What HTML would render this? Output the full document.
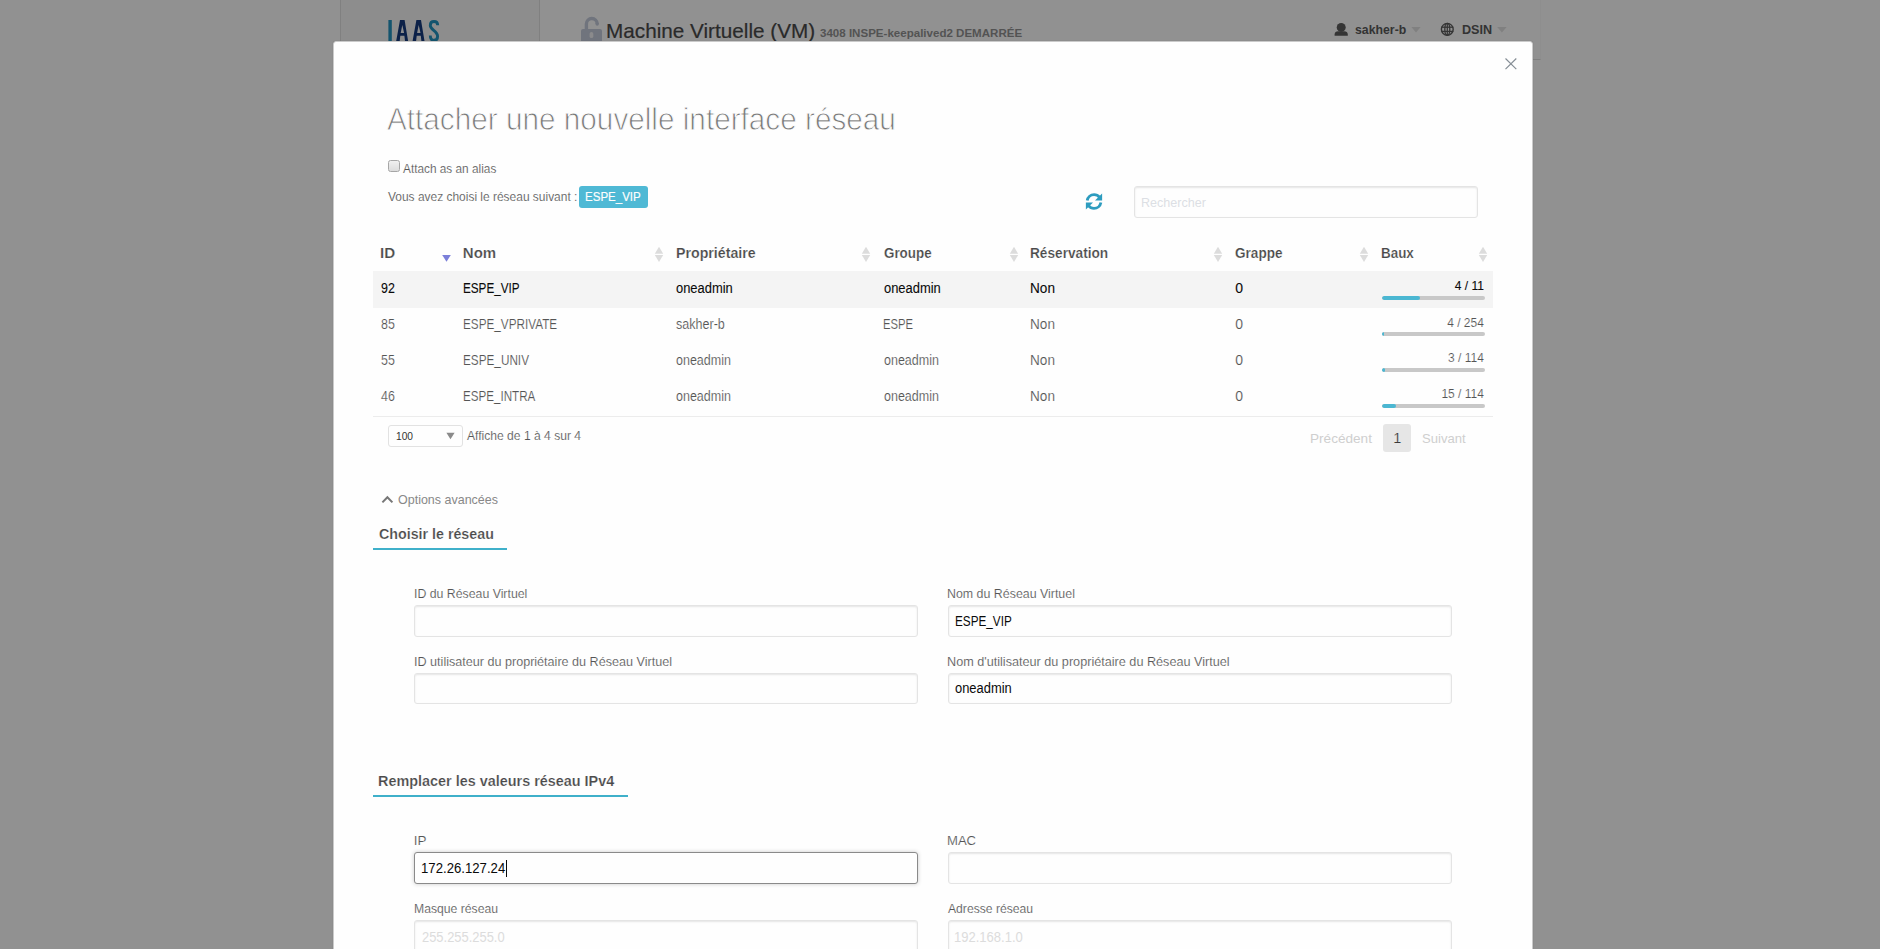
<!DOCTYPE html>
<html><head><meta charset="utf-8"><title>Attacher une nouvelle interface réseau</title>
<style>
html,body{margin:0;padding:0;width:1880px;height:949px;overflow:hidden;background:#fff;font-family:"Liberation Sans",sans-serif;}
.t{position:absolute;white-space:nowrap;transform-origin:0 0;}
#page{position:absolute;left:0;top:0;width:1880px;height:949px;background:#fff;}
#side{position:absolute;left:340px;top:0;width:198px;height:949px;background:#f8f8f8;border-left:1px solid #e0e0e0;border-right:1px solid #e0e0e0;}
#hdr{position:absolute;left:540px;top:0;width:1000px;height:59px;border-bottom:1px solid #dedede;border-right:1px solid #f9f9f9;}
#ov{position:absolute;left:0;top:0;width:1880px;height:949px;background:rgba(10,10,10,0.45);}
#modal{position:absolute;left:333px;top:41px;width:1198px;height:940px;background:#fefefe;border:1px solid #cacaca;border-radius:3px;box-shadow:0 0 1px rgba(0,0,0,0.25);}
#m{position:absolute;left:0;top:0;width:1880px;height:949px;}
.inp{position:absolute;box-sizing:border-box;height:32px;background:#fefefe;border:1px solid #e4e4e4;border-radius:3px;box-shadow:inset 0 1px 2px rgba(10,10,10,0.1);}
.bar{position:absolute;left:1382px;width:103.3px;height:4px;background:#c8c8c8;border-radius:2px;overflow:hidden;}
.bar div{height:4px;background:#4bb7d2;border-radius:2px;}
.so{position:absolute;}
</style></head><body>
<div id="page">
  <div id="side"></div>
  <div id="hdr"></div>
  <svg style="position:absolute;left:380px;top:14px" width="70" height="30" viewBox="380 14 70 30">
    <rect x="388.4" y="20" width="3.4" height="24" fill="#1a91c0"/>
    <path d="M396.2 41 L400 20 L404.6 20 L408.1 41 Z M402.3 24.9 L404.1 32.9 L400.7 32.9 Z M400.3 35.7 L404.4 35.7 L405 41 L399.7 41 Z" fill="#0d347a" fill-rule="evenodd"/>
    <path d="M412.6 41 L416.4 20 L421 20 L424.5 41 Z M418.7 24.9 L420.5 32.9 L417.1 32.9 Z M416.7 35.7 L420.8 35.7 L421.4 41 L416.1 41 Z" fill="#0d347a" fill-rule="evenodd"/>
    <path d="M437.7 25.2 C437.7 22.6 436.2 21.5 434 21.5 C431.7 21.5 430.3 23 430.3 25.4 C430.3 29.6 437.6 31.2 437.6 36.2 C437.6 38.8 436.2 40.3 434 40.3 C431.7 40.3 430.3 38.8 430.3 35.4" fill="none" stroke="#1a91c0" stroke-width="2.9"/>
  </svg>
  <!-- lock -->
  <svg style="position:absolute;left:578px;top:14px" width="28" height="30" viewBox="578 14 28 30">
    <path d="M586.4 30 L586.4 23.9 A5.4 5.4 0 0 1 597.2 23.9" fill="none" stroke="#c3cadb" stroke-width="3.4"/>
    <circle cx="597.2" cy="24" r="1.7" fill="#c3cadb"/>
    <rect x="581" y="29" width="21" height="14" rx="2" fill="#c3cadb"/>
    <rect x="589.6" y="32" width="3.7" height="6" rx="1.85" fill="#f2f3f6"/>
  </svg>
  <div class=t style='left:605.81px;top:18px;font-size:21px;font-weight:400;line-height:26px;color:#444;transform:scaleX(0.9865);-webkit-text-stroke:0.2px #444;'>Machine Virtuelle (VM)</div>
<div class=t style='left:819.50px;top:26px;font-size:11.5px;font-weight:700;line-height:14px;color:#8f8f8f;transform:scaleX(1.0041);'>3408 INSPE-keepalived2 DEMARRÉE</div>
<div class=t style='left:1355.00px;top:21px;font-size:13.5px;font-weight:700;line-height:17px;color:#555;transform:scaleX(0.9103);'>sakher-b</div>
<div class=t style='left:1461.60px;top:21px;font-size:13.5px;font-weight:700;line-height:17px;color:#555;transform:scaleX(0.9332);'>DSIN</div>
  <!-- user icon -->
  <svg style="position:absolute;left:1333px;top:21px" width="17" height="17" viewBox="1333 21 17 17">
    <circle cx="1341.2" cy="27.4" r="4.5" fill="#585858"/>
    <path d="M1334.6 35.8 L1334.6 34.4 C1334.6 32.2 1336.2 31.2 1338 31.2 L1344.4 31.2 C1346.2 31.2 1347.8 32.2 1347.8 34.4 L1347.8 35.8 Z" fill="#585858"/>
  </svg>
  <svg style="position:absolute;left:1410px;top:26px" width="12" height="8" viewBox="0 0 12 8"><path d="M1.4 1 L10.6 1 L6 6.4 Z" fill="#e0e0e0"/></svg>
  <!-- globe -->
  <svg style="position:absolute;left:1440px;top:22px" width="15" height="15" viewBox="1440 22 15 15">
    <circle cx="1447.3" cy="29.3" r="5.9" fill="none" stroke="#585858" stroke-width="1.4"/>
    <ellipse cx="1447.3" cy="29.3" rx="2.5" ry="5.9" fill="none" stroke="#585858" stroke-width="1.3"/>
    <line x1="1441.3" y1="27.2" x2="1453.3" y2="27.2" stroke="#585858" stroke-width="1.3"/>
    <line x1="1441.3" y1="31.4" x2="1453.3" y2="31.4" stroke="#585858" stroke-width="1.3"/>
    <line x1="1447.3" y1="23.4" x2="1447.3" y2="35.2" stroke="#585858" stroke-width="1.2"/>
  </svg>
  <svg style="position:absolute;left:1496px;top:26px" width="12" height="8" viewBox="0 0 12 8"><path d="M1.2 1 L10.6 1 L5.9 6.4 Z" fill="#e0e0e0"/></svg>
</div>
<div id="ov"></div>
<div id="modal"></div>
<div id="m">
  <!-- close X -->
  <svg style="position:absolute;left:1503px;top:55.6px" width="16" height="16" viewBox="0 0 16 16">
    <path d="M2.5 2.5 L13.3 13.1 M13.3 2.5 L2.5 13.1" stroke="#858d95" stroke-width="1.15" fill="none"/>
  </svg>
  <!-- checkbox -->
  <div style="position:absolute;left:388px;top:160px;width:10px;height:10px;border:1px solid #a6a6a6;border-radius:2.5px;background:linear-gradient(#f0f0f0,#dcdcdc);"></div>
  <!-- label -->
  <div style="position:absolute;left:579px;top:186px;width:69px;height:21.5px;background:#4fb9d5;border-radius:3px;"></div>
  <!-- refresh icon -->
  <svg style="position:absolute;left:1084px;top:192px" width="20" height="19" viewBox="0 0 20 19">
    <path d="M3.2 8.6 C3.8 5.2 6.6 2.6 10.1 2.6 C12.4 2.6 14.3 3.7 15.6 5.3" fill="none" stroke="#2d9cbf" stroke-width="2.8"/>
    <path d="M18.1 1.4 L18.1 8.6 L11 8.6 Z" fill="#2d9cbf"/>
    <path d="M16.9 10.4 C16.3 13.8 13.5 16.4 10 16.4 C7.7 16.4 5.8 15.3 4.5 13.7" fill="none" stroke="#2d9cbf" stroke-width="2.8"/>
    <path d="M1.9 17.6 L1.9 10.4 L9 10.4 Z" fill="#2d9cbf"/>
  </svg>
  <!-- search -->
  <div class="inp" style="left:1134px;top:186px;width:344px;height:32px;"></div>
  <!-- selected row -->
  <div style="position:absolute;left:373px;top:271px;width:1120px;height:36.5px;background:#f4f4f4;"></div>
  <div style="position:absolute;left:373px;top:416px;width:1120px;height:1px;background:#ececec;"></div>
  <svg class=so style='left:654.2px;top:246px' width='10' height='17' viewBox='0 0 10 17'><path d='M5 0.8 L9.2 7.8 L0.8 7.8 Z' fill='#dcdcdc'/><path d='M0.8 9 L9.2 9 L5 16 Z' fill='#dcdcdc'/></svg><svg class=so style='left:861.2px;top:246px' width='10' height='17' viewBox='0 0 10 17'><path d='M5 0.8 L9.2 7.8 L0.8 7.8 Z' fill='#dcdcdc'/><path d='M0.8 9 L9.2 9 L5 16 Z' fill='#dcdcdc'/></svg><svg class=so style='left:1008.6px;top:246px' width='10' height='17' viewBox='0 0 10 17'><path d='M5 0.8 L9.2 7.8 L0.8 7.8 Z' fill='#dcdcdc'/><path d='M0.8 9 L9.2 9 L5 16 Z' fill='#dcdcdc'/></svg><svg class=so style='left:1212.6px;top:246px' width='10' height='17' viewBox='0 0 10 17'><path d='M5 0.8 L9.2 7.8 L0.8 7.8 Z' fill='#dcdcdc'/><path d='M0.8 9 L9.2 9 L5 16 Z' fill='#dcdcdc'/></svg><svg class=so style='left:1358.9px;top:246px' width='10' height='17' viewBox='0 0 10 17'><path d='M5 0.8 L9.2 7.8 L0.8 7.8 Z' fill='#dcdcdc'/><path d='M0.8 9 L9.2 9 L5 16 Z' fill='#dcdcdc'/></svg><svg class=so style='left:1478.0px;top:246px' width='10' height='17' viewBox='0 0 10 17'><path d='M5 0.8 L9.2 7.8 L0.8 7.8 Z' fill='#dcdcdc'/><path d='M0.8 9 L9.2 9 L5 16 Z' fill='#dcdcdc'/></svg><svg class=so style='left:441px;top:254px' width='11' height='9' viewBox='0 0 11 9'><path d='M1.2 1 L9.8 1 L5.5 7.8 Z' fill='#7b7fd9'/></svg>
  <div class=bar style='top:296px'><div style='width:37.56px'></div></div>
<div class=bar style='top:332px'><div style='width:1.63px'></div></div>
<div class=bar style='top:368px'><div style='width:2.72px'></div></div>
<div class=bar style='top:404px'><div style='width:13.59px'></div></div>

  <!-- page length select -->
  <div style="position:absolute;left:388px;top:425px;width:72.5px;height:19.5px;border:1px solid #e2e2e2;border-radius:3px;background:#fefefe;"></div>
  <svg style="position:absolute;left:445px;top:431px" width="11" height="10" viewBox="0 0 11 10"><path d="M1.4 1.8 L9.6 1.8 L5.5 8.2 Z" fill="#8a8a8a"/></svg>
  <!-- pagination current -->
  <div style="position:absolute;left:1383px;top:424px;width:28px;height:28px;background:#e6e6e6;border-radius:3px;"></div>
  <!-- chevron -->
  <svg style="position:absolute;left:380px;top:493px" width="15" height="12" viewBox="0 0 15 12"><path d="M2.4 9.4 L7.4 4.2 L12.4 9.4" fill="none" stroke="#777" stroke-width="2"/></svg>
  <!-- underlines -->
  <div style="position:absolute;left:373px;top:548px;width:134px;height:2px;background:#3fb0ca;"></div>
  <div style="position:absolute;left:373px;top:795px;width:255px;height:2px;background:#3fb0ca;"></div>
  <!-- inputs -->
  <div class="inp" style="left:414px;top:605px;width:504px;"></div>
  <div class="inp" style="left:948px;top:605px;width:504px;"></div>
  <div class="inp" style="left:414px;top:673px;width:504px;height:31px;"></div>
  <div class="inp" style="left:948px;top:673px;width:504px;height:31px;"></div>
  <div class="inp" style="left:414px;top:852px;width:504px;height:32px;border-color:#8a8a8a;box-shadow:0 0 4px #cacaca;"></div>
  <div class="inp" style="left:948px;top:852px;width:504px;height:32px;"></div>
  <div class="inp" style="left:414px;top:920px;width:504px;height:40px;"></div>
  <div class="inp" style="left:948px;top:920px;width:504px;height:40px;"></div>
  <div style="position:absolute;left:505.5px;top:860px;width:1px;height:17px;background:#0a0a0a;"></div>
  <div class=t style='left:387.30px;top:99px;font-size:32px;font-weight:400;line-height:40px;color:#7a7a7a;transform:scaleX(0.9288);-webkit-text-stroke:0.9px #fefefe;'>Attacher une nouvelle interface réseau</div>
<div class=t style='left:403.00px;top:160px;font-size:13.5px;font-weight:400;line-height:17px;color:#555;transform:scaleX(0.8754);-webkit-text-stroke:0.15px #fefefe;'>Attach as an alias</div>
<div class=t style='left:387.70px;top:188px;font-size:13.5px;font-weight:400;line-height:17px;color:#555;transform:scaleX(0.8854);-webkit-text-stroke:0.15px #fefefe;'>Vous avez choisi le réseau suivant :</div>
<div class=t style='left:585.45px;top:188px;font-size:13.5px;font-weight:400;line-height:17px;color:#fefefe;transform:scaleX(0.8541);-webkit-text-stroke:0.2px #fefefe;'>ESPE_VIP</div>
<div class=t style='left:1141.47px;top:194px;font-size:13.5px;font-weight:400;line-height:17px;color:#dcdfe4;transform:scaleX(0.9295);'>Rechercher</div>
<div class=t style='left:380.19px;top:243px;font-size:15px;font-weight:700;line-height:19px;color:#4a4a4a;transform:scaleX(1.0094);-webkit-text-stroke:0.2px #fefefe;'>ID</div>
<div class=t style='left:462.80px;top:243px;font-size:15px;font-weight:700;line-height:19px;color:#4a4a4a;-webkit-text-stroke:0.2px #fefefe;'>Nom</div>
<div class=t style='left:675.75px;top:243px;font-size:15px;font-weight:700;line-height:19px;color:#4a4a4a;transform:scaleX(0.9462);-webkit-text-stroke:0.2px #fefefe;'>Propriétaire</div>
<div class=t style='left:884.00px;top:243px;font-size:15px;font-weight:700;line-height:19px;color:#4a4a4a;transform:scaleX(0.8926);-webkit-text-stroke:0.2px #fefefe;'>Groupe</div>
<div class=t style='left:1029.59px;top:243px;font-size:15px;font-weight:700;line-height:19px;color:#4a4a4a;transform:scaleX(0.9102);-webkit-text-stroke:0.2px #fefefe;'>Réservation</div>
<div class=t style='left:1235.30px;top:243px;font-size:15px;font-weight:700;line-height:19px;color:#4a4a4a;transform:scaleX(0.9047);-webkit-text-stroke:0.2px #fefefe;'>Grappe</div>
<div class=t style='left:1380.91px;top:243px;font-size:15px;font-weight:700;line-height:19px;color:#4a4a4a;transform:scaleX(0.8944);-webkit-text-stroke:0.2px #fefefe;'>Baux</div>
<div class=t style='left:381.20px;top:279px;font-size:14px;font-weight:400;line-height:18px;color:#0a0a0a;transform:scaleX(0.8869);-webkit-text-stroke:0.1px #0a0a0a;'>92</div>
<div class=t style='left:463.06px;top:279px;font-size:14px;font-weight:400;line-height:18px;color:#0a0a0a;transform:scaleX(0.8363);-webkit-text-stroke:0.1px #0a0a0a;'>ESPE_VIP</div>
<div class=t style='left:676.30px;top:279px;font-size:14px;font-weight:400;line-height:18px;color:#0a0a0a;transform:scaleX(0.9225);-webkit-text-stroke:0.1px #0a0a0a;'>oneadmin</div>
<div class=t style='left:884.00px;top:279px;font-size:14px;font-weight:400;line-height:18px;color:#0a0a0a;transform:scaleX(0.9225);-webkit-text-stroke:0.1px #0a0a0a;'>oneadmin</div>
<div class=t style='left:1030.03px;top:279px;font-size:14px;font-weight:400;line-height:18px;color:#0a0a0a;transform:scaleX(0.9709);-webkit-text-stroke:0.1px #0a0a0a;'>Non</div>
<div class=t style='left:1235.30px;top:279px;font-size:14px;font-weight:400;line-height:18px;color:#0a0a0a;-webkit-text-stroke:0.1px #0a0a0a;'>0</div>
<div class=t style='left:1454.74px;top:279px;font-size:12px;font-weight:400;line-height:15px;color:#0a0a0a;-webkit-text-stroke:0.1px #0a0a0a;'>4 / 11</div>
<div class=t style='left:381.20px;top:315px;font-size:14px;font-weight:400;line-height:18px;color:#555;transform:scaleX(0.8869);-webkit-text-stroke:0.15px #fefefe;'>85</div>
<div class=t style='left:463.06px;top:315px;font-size:14px;font-weight:400;line-height:18px;color:#555;transform:scaleX(0.8381);-webkit-text-stroke:0.15px #fefefe;'>ESPE_VPRIVATE</div>
<div class=t style='left:676.30px;top:315px;font-size:14px;font-weight:400;line-height:18px;color:#555;transform:scaleX(0.8961);-webkit-text-stroke:0.15px #fefefe;'>sakher-b</div>
<div class=t style='left:883.19px;top:315px;font-size:14px;font-weight:400;line-height:18px;color:#555;transform:scaleX(0.8052);-webkit-text-stroke:0.15px #fefefe;'>ESPE</div>
<div class=t style='left:1030.03px;top:315px;font-size:14px;font-weight:400;line-height:18px;color:#555;transform:scaleX(0.9709);-webkit-text-stroke:0.15px #fefefe;'>Non</div>
<div class=t style='left:1235.30px;top:315px;font-size:14px;font-weight:400;line-height:18px;color:#555;-webkit-text-stroke:0.15px #fefefe;'>0</div>
<div class=t style='left:1447.18px;top:316px;font-size:12px;font-weight:400;line-height:15px;color:#555;-webkit-text-stroke:0.15px #fefefe;'>4 / 254</div>
<div class=t style='left:381.20px;top:351px;font-size:14px;font-weight:400;line-height:18px;color:#555;transform:scaleX(0.8869);-webkit-text-stroke:0.15px #fefefe;'>55</div>
<div class=t style='left:463.06px;top:351px;font-size:14px;font-weight:400;line-height:18px;color:#555;transform:scaleX(0.8396);-webkit-text-stroke:0.15px #fefefe;'>ESPE_UNIV</div>
<div class=t style='left:676.30px;top:351px;font-size:14px;font-weight:400;line-height:18px;color:#555;transform:scaleX(0.8929);-webkit-text-stroke:0.15px #fefefe;'>oneadmin</div>
<div class=t style='left:884.00px;top:351px;font-size:14px;font-weight:400;line-height:18px;color:#555;transform:scaleX(0.8929);-webkit-text-stroke:0.15px #fefefe;'>oneadmin</div>
<div class=t style='left:1030.03px;top:351px;font-size:14px;font-weight:400;line-height:18px;color:#555;transform:scaleX(0.9709);-webkit-text-stroke:0.15px #fefefe;'>Non</div>
<div class=t style='left:1235.30px;top:351px;font-size:14px;font-weight:400;line-height:18px;color:#555;-webkit-text-stroke:0.15px #fefefe;'>0</div>
<div class=t style='left:1448.07px;top:351px;font-size:12px;font-weight:400;line-height:15px;color:#555;-webkit-text-stroke:0.15px #fefefe;'>3 / 114</div>
<div class=t style='left:381.20px;top:387px;font-size:14px;font-weight:400;line-height:18px;color:#555;transform:scaleX(0.8869);-webkit-text-stroke:0.15px #fefefe;'>46</div>
<div class=t style='left:463.07px;top:387px;font-size:14px;font-weight:400;line-height:18px;color:#555;transform:scaleX(0.8306);-webkit-text-stroke:0.15px #fefefe;'>ESPE_INTRA</div>
<div class=t style='left:676.30px;top:387px;font-size:14px;font-weight:400;line-height:18px;color:#555;transform:scaleX(0.8929);-webkit-text-stroke:0.15px #fefefe;'>oneadmin</div>
<div class=t style='left:884.00px;top:387px;font-size:14px;font-weight:400;line-height:18px;color:#555;transform:scaleX(0.8929);-webkit-text-stroke:0.15px #fefefe;'>oneadmin</div>
<div class=t style='left:1030.03px;top:387px;font-size:14px;font-weight:400;line-height:18px;color:#555;transform:scaleX(0.9709);-webkit-text-stroke:0.15px #fefefe;'>Non</div>
<div class=t style='left:1235.30px;top:387px;font-size:14px;font-weight:400;line-height:18px;color:#555;-webkit-text-stroke:0.15px #fefefe;'>0</div>
<div class=t style='left:1441.39px;top:387px;font-size:12px;font-weight:400;line-height:15px;color:#555;-webkit-text-stroke:0.15px #fefefe;'>15 / 114</div>
<div class=t style='left:395.80px;top:430px;font-size:10.5px;font-weight:400;line-height:13px;color:#333;transform:scaleX(0.9729);'>100</div>
<div class=t style='left:467.40px;top:427px;font-size:13.5px;font-weight:400;line-height:17px;color:#555;transform:scaleX(0.8958);-webkit-text-stroke:0.15px #fefefe;'>Affiche de 1 à 4 sur 4</div>
<div class=t style='left:1309.69px;top:430px;font-size:13.5px;font-weight:400;line-height:17px;color:#cfcfcf;transform:scaleX(1.0067);'>Précédent</div>
<div class=t style='left:1393.30px;top:429px;font-size:14.5px;font-weight:400;line-height:18px;color:#3a3a3a;-webkit-text-stroke:0.15px #e6e6e6;'>1</div>
<div class=t style='left:1422.20px;top:430px;font-size:13.5px;font-weight:400;line-height:17px;color:#cfcfcf;transform:scaleX(0.9674);'>Suivant</div>
<div class=t style='left:397.90px;top:491px;font-size:13.5px;font-weight:400;line-height:17px;color:#888;transform:scaleX(0.9251);'>Options avancées</div>
<div class=t style='left:379.40px;top:524px;font-size:15px;font-weight:700;line-height:19px;color:#4a4a4a;transform:scaleX(0.9501);-webkit-text-stroke:0.2px #fefefe;'>Choisir le réseau</div>
<div class=t style='left:413.79px;top:585px;font-size:13.5px;font-weight:400;line-height:17px;color:#555;transform:scaleX(0.9114);-webkit-text-stroke:0.15px #fefefe;'>ID du Réseau Virtuel</div>
<div class=t style='left:946.68px;top:585px;font-size:13.5px;font-weight:400;line-height:17px;color:#555;transform:scaleX(0.9181);-webkit-text-stroke:0.15px #fefefe;'>Nom du Réseau Virtuel</div>
<div class=t style='left:954.76px;top:612px;font-size:14px;font-weight:400;line-height:18px;color:#0a0a0a;transform:scaleX(0.8378);'>ESPE_VIP</div>
<div class=t style='left:413.77px;top:653px;font-size:13.5px;font-weight:400;line-height:17px;color:#555;transform:scaleX(0.9323);-webkit-text-stroke:0.15px #fefefe;'>ID utilisateur du propriétaire du Réseau Virtuel</div>
<div class=t style='left:946.66px;top:653px;font-size:13.5px;font-weight:400;line-height:17px;color:#555;transform:scaleX(0.9367);-webkit-text-stroke:0.15px #fefefe;'>Nom d'utilisateur du propriétaire du Réseau Virtuel</div>
<div class=t style='left:955.30px;top:679px;font-size:14px;font-weight:400;line-height:18px;color:#0a0a0a;transform:scaleX(0.9225);'>oneadmin</div>
<div class=t style='left:378.14px;top:771px;font-size:15px;font-weight:700;line-height:19px;color:#4a4a4a;transform:scaleX(0.9603);-webkit-text-stroke:0.2px #fefefe;'>Remplacer les valeurs réseau IPv4</div>
<div class=t style='left:413.70px;top:832px;font-size:13.5px;font-weight:400;line-height:17px;color:#555;-webkit-text-stroke:0.15px #fefefe;'>IP</div>
<div class=t style='left:946.63px;top:832px;font-size:13.5px;font-weight:400;line-height:17px;color:#555;transform:scaleX(0.9675);-webkit-text-stroke:0.15px #fefefe;'>MAC</div>
<div class=t style='left:420.56px;top:859px;font-size:14px;font-weight:400;line-height:18px;color:#0a0a0a;transform:scaleX(0.9409);'>172.26.127.24</div>
<div class=t style='left:413.80px;top:900px;font-size:13.5px;font-weight:400;line-height:17px;color:#555;transform:scaleX(0.9023);-webkit-text-stroke:0.15px #fefefe;'>Masque réseau</div>
<div class=t style='left:947.60px;top:900px;font-size:13.5px;font-weight:400;line-height:17px;color:#555;transform:scaleX(0.8996);-webkit-text-stroke:0.15px #fefefe;'>Adresse réseau</div>
<div class=t style='left:421.50px;top:928px;font-size:14px;font-weight:400;line-height:18px;color:#dcdcdc;transform:scaleX(0.9226);'>255.255.255.0</div>
<div class=t style='left:954.17px;top:928px;font-size:14px;font-weight:400;line-height:18px;color:#dcdcdc;transform:scaleX(0.9307);'>192.168.1.0</div>
</div>
</body></html>
